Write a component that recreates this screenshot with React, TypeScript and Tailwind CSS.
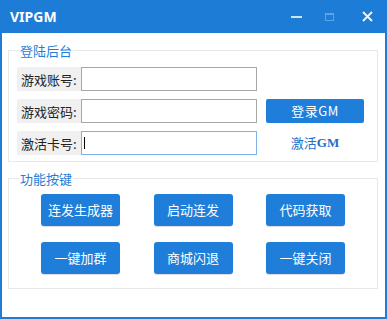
import React from "react";

const CJK = { fontFamily: '"Microsoft YaHei", "Noto Sans CJK SC", "Noto Sans", sans-serif' };

function Label({ text }: { text: string }) {
  return (
    <div className="w-[64px] h-[24px] bg-[#f0f0f0] flex items-center pl-[4px] text-[13px] text-[#222] leading-none whitespace-nowrap">
      {text}
    </div>
  );
}

function Btn({ text }: { text: string }) {
  return (
    <div className="w-[79px] h-[32px] rounded-[3px] bg-[#1e7ed9] text-white text-[13px] flex items-center justify-center shadow-[0_1px_1px_rgba(0,0,0,0.15)]">
      {text}
    </div>
  );
}

export default function App() {
  return (
    <div className="w-[387px] h-[319px] bg-[#1c7cd6] flex flex-col p-[2px] pt-0" style={CJK}>
      <div className="h-[33px] -mx-[2px] flex items-center pl-[10px] pr-[12px] text-white">
        <span className="text-[14px] font-bold" style={{ fontFamily: '"Noto Sans", "Open Sans", sans-serif' }}>VIPGM</span>
        <div className="ml-auto flex items-center">
          <div className="w-[11px] h-[2px] bg-[#cfe4f8] mr-[23px]" />
          <div className="w-[9px] h-[8px] border border-[#5fa2e2] border-t-2 mr-[28px]" />
          <svg width="11" height="11" viewBox="0 0 11 11" className="mr-[2px]">
            <path d="M1 1 L10 10 M10 1 L1 10" stroke="#e8f2fc" strokeWidth="2" />
          </svg>
        </div>
      </div>
      <div className="flex-1 bg-white flex flex-col pl-[6px] pr-[7px] pt-[9px]">
        <fieldset className="border border-[#e8e8e8] p-0 m-0">
          <legend className="ml-[10px] px-[1px] text-[13px] text-[#1e7ed9] leading-[17px]">登陆后台</legend>
          <div className="flex flex-col gap-[8px] pt-[8px] pb-[6px] pl-[8px]">
            <div className="flex items-center">
              <Label text="游戏账号:" />
              <div className="w-[176px] h-[24px] border border-[#a8a8a8] bg-white" />
            </div>
            <div className="flex items-center">
              <Label text="游戏密码:" />
              <div className="w-[176px] h-[24px] border border-[#a8a8a8] bg-white" />
              <div className="ml-[9px] w-[98px] h-[24px] rounded-[2px] bg-[#1e7ed9] text-white text-[13px] flex items-center justify-center tracking-[0.5px]">
                登录GM
              </div>
            </div>
            <div className="flex items-center">
              <Label text="激活卡号:" />
              <div className="w-[176px] h-[24px] border border-[#7db3e8] bg-white flex items-center pl-[2px]">
                <div className="w-[1px] h-[12px] bg-black" />
              </div>
              <div className="ml-[9px] w-[98px] h-[24px] flex items-center justify-center text-[13px] text-[#1e6fc8]">
                激活<span className="font-bold" style={{ fontFamily: '"Liberation Serif", serif' }}>GM</span>
              </div>
            </div>
          </div>
        </fieldset>
        <fieldset className="mt-[8px] border border-[#e8e8e8] p-0 m-0">
          <legend className="ml-[10px] px-[1px] text-[13px] text-[#1e7ed9] leading-[17px]">功能按键</legend>
          <div className="grid grid-cols-[79px_79px_79px] gap-x-[33.5px] gap-y-[16px] pt-[7px] pb-[14px] pl-[32px]">
            <Btn text="连发生成器" />
            <Btn text="启动连发" />
            <Btn text="代码获取" />
            <Btn text="一键加群" />
            <Btn text="商城闪退" />
            <Btn text="一键关闭" />
          </div>
        </fieldset>
      </div>
    </div>
  );
}
